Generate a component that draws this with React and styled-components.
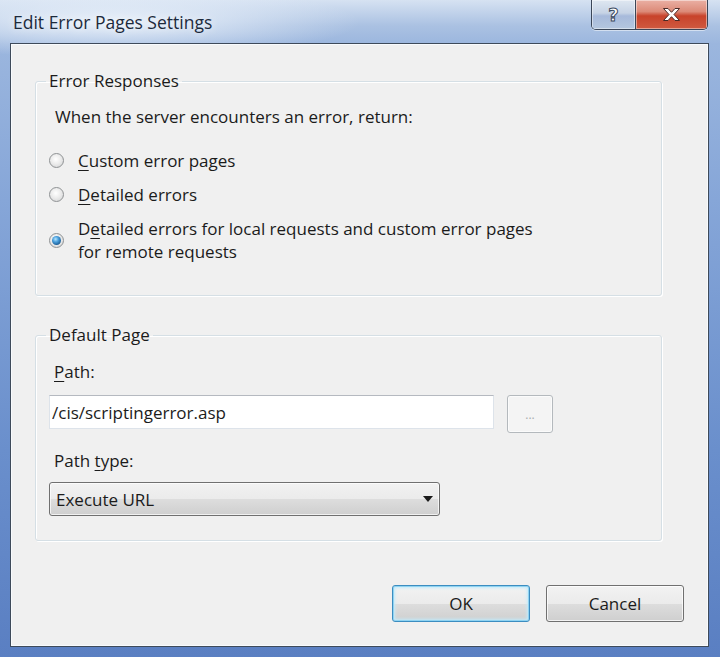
import React from "react";
import styled, { createGlobalStyle } from "styled-components";

const GlobalStyle = createGlobalStyle`
  html, body {
    margin: 0;
    padding: 0;
    overflow: hidden;
  }
  body {
    font-family: "Open Sans", "Noto Sans", sans-serif;
    color: #1b1b1b;
  }
`;

// Aero frame around the whole dialog
const Window = styled.div`
  box-sizing: border-box;
  width: 720px;
  height: 657px;
  display: flex;
  flex-direction: column;
  padding: 0 11px 10px 10px;
  background:
    radial-gradient(ellipse 250px 36px at 110px 22px, rgba(236, 243, 251, 0.95), rgba(236, 243, 251, 0) 100%),
    linear-gradient(180deg, #d6e2f2 0px, #aac1e2 26px, #9bb6de 44px, #86a6d8 200px, #6a8fcc 450px, #5a7fc2 657px);
`;

const TitleBar = styled.div`
  height: 43px;
  display: flex;
  justify-content: space-between;
  align-items: flex-start;
  padding-left: 3px;
`;

const Title = styled.div`
  margin-top: 9px;
  font-size: 17.5px;
  line-height: 26px;
  color: #1c2a3c;
  text-shadow: 0 0 8px rgba(255, 255, 255, 0.9);
`;

const CaptionButtons = styled.div`
  display: flex;
  height: 29px;
  margin-right: 1px;
  border: 1px solid #3a4658;
  border-top: none;
  border-radius: 0 0 5px 5px;
  overflow: hidden;
  box-shadow: 0 1px 0 rgba(255, 255, 255, 0.5);
`;

const CaptionButton = styled.div`
  width: ${(p) => p.$width}px;
  display: flex;
  align-items: center;
  justify-content: center;
  background: ${(p) =>
    p.$close
      ? "linear-gradient(180deg, #eab0a4 0%, #dc8a78 40%, #c8432b 55%, #d05a40 100%)"
      : "linear-gradient(180deg, #dfe7f1 0%, #c6d3e5 45%, #a7badb 55%, #b4c7df 100%)"};
  box-shadow: inset 0 0 0 1px rgba(255, 255, 255, 0.45);
  & + & {
    border-left: 1px solid #3a4658;
  }
`;

const HelpGlyph = styled.span`
  font-family: "DejaVu Sans", sans-serif;
  font-weight: bold;
  font-size: 18px;
  line-height: 1;
  color: #ffffff;
  -webkit-text-stroke: 1px #3b4a5e;
  margin-top: 1px;
`;

const Client = styled.div`
  flex: 1;
  display: flex;
  flex-direction: column;
  border: 1px solid #3e4a5a;
  background: #f0f0f0;
  box-shadow: inset 0 0 0 1px #f8fbfe;
`;

const GroupBox = styled.fieldset`
  margin: ${(p) => p.$top}px 46px 0 24px;
  padding: ${(p) => p.$padTop}px 13px ${(p) => p.$padBottom}px 13px;
  border: 1px solid #d5dfe5;
  border-radius: 3px;
  box-shadow: inset 1px 1px 0 #ffffff, 1px 1px 0 #ffffff;
  min-width: 0;
`;

const GroupLabel = styled.legend`
  margin-left: -3px;
  padding: 0 3px;
  font-size: 17px;
  line-height: 22px;
`;

const Text = styled.div`
  font-size: 17px;
  line-height: 22px;
  padding-left: ${(p) => p.$indent || 0}px;
  margin-top: ${(p) => p.$gap || 0}px;
`;

const Key = styled.span`
  text-decoration: underline;
  text-underline-offset: 3px;
  text-decoration-thickness: 1px;
`;

const RadioList = styled.div`
  display: flex;
  flex-direction: column;
  gap: 11px;
  margin-top: 21px;
`;

const RadioRow = styled.label`
  display: flex;
  align-items: center;
  gap: 14px;
  font-size: 17px;
  line-height: 23px;
`;

const RadioCircle = styled.span`
  flex: none;
  box-sizing: border-box;
  width: 15px;
  height: 15px;
  border-radius: 50%;
  border: 1px solid #8f9294;
  background: radial-gradient(circle at 45% 40%, #ffffff 0%, #ececec 45%, #cfd0d1 100%);
  display: flex;
  align-items: center;
  justify-content: center;
  &::after {
    content: "";
    display: ${(p) => (p.$checked ? "block" : "none")};
    width: 9px;
    height: 9px;
    border-radius: 50%;
    background: radial-gradient(circle at 40% 35%, #b7e6ff 0%, #4a9fdc 35%, #1b5c95 75%, #103e6a 100%);
  }
`;

const PathRow = styled.div`
  display: flex;
  align-items: flex-start;
  gap: 13px;
  margin-top: 12px;
`;

const TextField = styled.input`
  box-sizing: border-box;
  width: 445px;
  height: 34px;
  margin: 0;
  padding: 0 2px;
  border: 1px solid #dde3ea;
  border-top-color: #b5b9c0;
  background: #ffffff;
  font-family: "Open Sans", "Noto Sans", sans-serif;
  font-size: 17px;
  color: #1b1b1b;
  outline: none;
`;

const BrowseButton = styled.div`
  box-sizing: border-box;
  width: 46px;
  height: 38px;
  border: 1px solid #b4b9bd;
  border-radius: 3px;
  background: #f4f4f4;
  box-shadow: inset 0 0 0 1px #fbfbfb;
  color: #a9acaf;
  font-size: 12px;
  line-height: 1;
  display: flex;
  align-items: center;
  justify-content: center;
  padding-top: 2px;
`;

const Combo = styled.div`
  box-sizing: border-box;
  width: 391px;
  height: 34px;
  margin-top: 10px;
  padding: 0 6px;
  display: flex;
  align-items: center;
  justify-content: space-between;
  border: 1px solid #707070;
  border-radius: 3px;
  background: linear-gradient(180deg, #f2f2f2 0%, #ebebeb 50%, #dddddd 51%, #cfcfcf 100%);
  box-shadow: inset 0 0 0 1px rgba(255, 255, 255, 0.7);
  font-size: 17px;
`;

const ButtonRow = styled.div`
  display: flex;
  justify-content: flex-end;
  gap: 16px;
  margin: 44px 24px 0 0;
`;

const DialogButton = styled.button`
  box-sizing: border-box;
  width: 138px;
  height: 37px;
  margin: 0;
  padding: 0;
  border: 1px solid ${(p) => (p.$default ? "#3c8dc0" : "#707070")};
  border-radius: 3px;
  background: linear-gradient(180deg, #f2f2f2 0%, #ebebeb 50%, #dddddd 51%, #cfcfcf 100%);
  box-shadow: ${(p) =>
    p.$default
      ? "inset 0 0 0 1px #8fd3f2, inset 0 0 3px 2px #c3ebfb"
      : "inset 0 0 0 1px rgba(255, 255, 255, 0.75)"};
  font-family: "Open Sans", "Noto Sans", sans-serif;
  font-size: 17px;
  color: #1b1b1b;
`;

const CloseIcon = () => (
  <svg width="19" height="15" viewBox="0 0 19 15">
    <path
      d="M1.5 1.5h4.5l3.5 3.8 3.5-3.8h4.5l-5.5 6 5.5 6h-4.5l-3.5-3.8-3.5 3.8h-4.5l5.5-6z"
      fill="#ffffff"
      stroke="#4a2a26"
      strokeWidth="1"
      strokeLinejoin="round"
    />
  </svg>
);

const ComboArrow = () => (
  <svg width="10" height="6" viewBox="0 0 10 6">
    <path d="M0 0h10L5 6z" fill="#1a1a1a" />
  </svg>
);

const responses = [
  { id: "custom", label: ["", "C", "ustom error pages"] },
  { id: "detailed", label: ["", "D", "etailed errors"] },
  {
    id: "local",
    label: ["D", "e", "tailed errors for local requests and custom error pages"],
    extra: "for remote requests",
    checked: true,
  },
];

const App = () => {
  return (
    <>
      <GlobalStyle />
      <Window>
        <TitleBar>
          <Title>Edit Error Pages Settings</Title>
          <CaptionButtons>
            <CaptionButton $width={43}>
              <HelpGlyph>?</HelpGlyph>
            </CaptionButton>
            <CaptionButton $width={71} $close>
              <CloseIcon />
            </CaptionButton>
          </CaptionButtons>
        </TitleBar>
        <Client>
          <GroupBox $top={26} $padTop={14} $padBottom={32}>
            <GroupLabel>Error Responses</GroupLabel>
            <Text $indent={6}>When the server encounters an error, return:</Text>
            <RadioList>
              {responses.map((r) => (
                <RadioRow key={r.id}>
                  <RadioCircle $checked={r.checked} />
                  <span>
                    {r.label[0]}
                    <Key>{r.label[1]}</Key>
                    {r.label[2]}
                    {r.extra && (
                      <>
                        <br />
                        {r.extra}
                      </>
                    )}
                  </span>
                </RadioRow>
              ))}
            </RadioList>
          </GroupBox>
          <GroupBox $top={28} $padTop={15} $padBottom={24}>
            <GroupLabel>Default Page</GroupLabel>
            <Text $indent={5}>
              <Key>P</Key>ath:
            </Text>
            <PathRow>
              <TextField readOnly defaultValue="/cis/scriptingerror.asp" />
              <BrowseButton>...</BrowseButton>
            </PathRow>
            <Text $indent={5} $gap={17}>
              Path <Key>t</Key>ype:
            </Text>
            <Combo>
              <span>Execute URL</span>
              <ComboArrow />
            </Combo>
          </GroupBox>
          <ButtonRow>
            <DialogButton $default>OK</DialogButton>
            <DialogButton>Cancel</DialogButton>
          </ButtonRow>
        </Client>
      </Window>
    </>
  );
};

export default App;
